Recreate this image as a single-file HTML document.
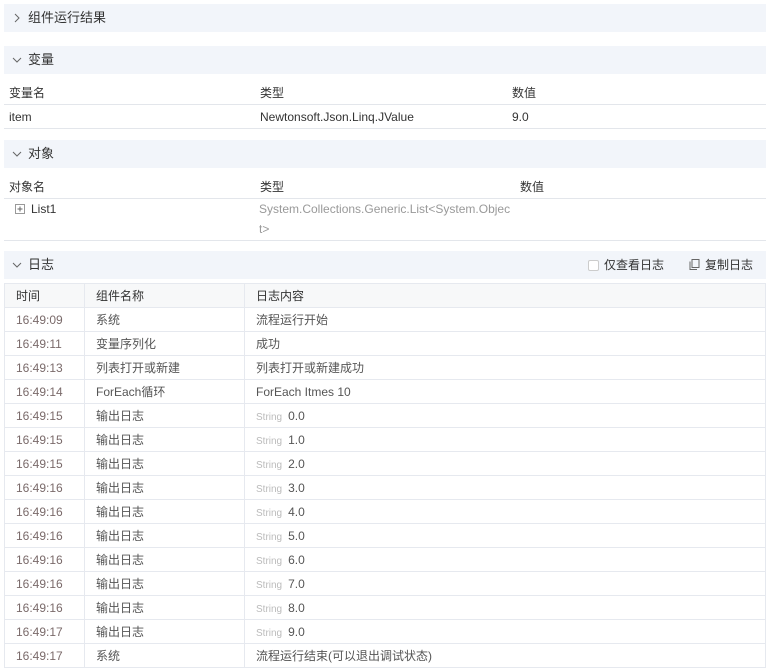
<!DOCTYPE html>
<html><head><meta charset="utf-8"><style>
*{margin:0;padding:0;box-sizing:border-box}
body{width:770px;height:671px;background:#fff;font-family:"Liberation Sans","Noto Sans CJK SC",sans-serif;font-size:12px;color:#333;position:relative;overflow:hidden}
.hd{position:absolute;left:4px;width:762px;height:28px;background:#f2f5fa;font-size:13px;line-height:28px;padding-left:24px;color:#333}
.hd > svg{position:absolute;left:8px;top:9px}
.a{position:absolute;white-space:nowrap}
.row{position:absolute;left:4px;width:762px;border-bottom:1px solid #e3e6eb}
table{position:absolute;left:4px;top:283px;width:762px;border-collapse:collapse}
td{border:1px solid #e6e9ef;height:24px;padding-left:11px;color:#555;font-size:12px}
tr.h td{background:#f7f8f9;color:#333}
td.t{color:#7a6a6a}
.s{color:#bbb;font-size:10px;margin-right:6px}
</style></head><body>
<div class="hd" style="top:4px"><svg width="10" height="10"><path d="M3 1l4 4-4 4" fill="none" stroke="#666" stroke-width="1"/></svg>组件运行结果</div>
<div class="hd" style="top:46px"><svg width="10" height="10"><path d="M1 3l4 4 4-4" fill="none" stroke="#666" stroke-width="1"/></svg>变量</div>
<div class="row" style="top:78px;height:27px;background:#fff"></div>
<div class="a" style="left:9px;top:84px">变量名</div><div class="a" style="left:260px;top:84px">类型</div><div class="a" style="left:512px;top:84px">数值</div>
<div class="row" style="top:105px;height:24px"></div>
<div class="a" style="left:9px;top:110px">item</div><div class="a" style="left:260px;top:110px">Newtonsoft.Json.Linq.JValue</div><div class="a" style="left:512px;top:110px">9.0</div>
<div class="hd" style="top:140px"><svg width="10" height="10"><path d="M1 3l4 4 4-4" fill="none" stroke="#666" stroke-width="1"/></svg>对象</div>
<div class="row" style="top:172px;height:27px"></div>
<div class="a" style="left:9px;top:178px">对象名</div><div class="a" style="left:260px;top:178px">类型</div><div class="a" style="left:520px;top:178px">数值</div>
<div class="row" style="top:199px;height:42px"></div>
<svg class="a" style="left:15px;top:204px" width="10" height="10"><rect x="0.5" y="0.5" width="9" height="9" fill="none" stroke="#999"/><path d="M2.5 5h5M5 2.5v5" stroke="#666"/></svg>
<div class="a" style="left:31px;top:202px">List1</div>
<div class="a" style="left:259px;top:202px;color:#999">System.Collections.Generic.List&lt;System.Objec</div>
<div class="a" style="left:259px;top:222px;color:#999">t&gt;</div>
<div class="hd" style="top:251px"><svg width="10" height="10"><path d="M1 3l4 4 4-4" fill="none" stroke="#666" stroke-width="1"/></svg>日志
<span class="a" style="left:584px;top:0;font-size:12px"><span style="display:inline-block;width:11px;height:11px;border:1px solid #ccc;border-radius:2px;background:#fff;vertical-align:-2px;margin-right:5px"></span>仅查看日志</span>
<span class="a" style="left:685px;top:0;font-size:12px"><svg width="11" height="11" style="vertical-align:-1px;margin-right:5px"><rect x="3" y="0.5" width="7" height="8" fill="none" stroke="#666"/><path d="M1 2.5v8h7" fill="none" stroke="#666"/></svg>复制日志</span></div>
<table>
<tr class="h"><td style="width:80px">时间</td><td style="width:160px">组件名称</td><td>日志内容</td></tr>
<tr><td class="t">16:49:09</td><td>系统</td><td>流程运行开始</td></tr>
<tr><td class="t">16:49:11</td><td>变量序列化</td><td>成功</td></tr>
<tr><td class="t">16:49:13</td><td>列表打开或新建</td><td>列表打开或新建成功</td></tr>
<tr><td class="t">16:49:14</td><td>ForEach循环</td><td>ForEach Itmes 10</td></tr>
<tr><td class="t">16:49:15</td><td>输出日志</td><td><span class="s">String</span>0.0</td></tr>
<tr><td class="t">16:49:15</td><td>输出日志</td><td><span class="s">String</span>1.0</td></tr>
<tr><td class="t">16:49:15</td><td>输出日志</td><td><span class="s">String</span>2.0</td></tr>
<tr><td class="t">16:49:16</td><td>输出日志</td><td><span class="s">String</span>3.0</td></tr>
<tr><td class="t">16:49:16</td><td>输出日志</td><td><span class="s">String</span>4.0</td></tr>
<tr><td class="t">16:49:16</td><td>输出日志</td><td><span class="s">String</span>5.0</td></tr>
<tr><td class="t">16:49:16</td><td>输出日志</td><td><span class="s">String</span>6.0</td></tr>
<tr><td class="t">16:49:16</td><td>输出日志</td><td><span class="s">String</span>7.0</td></tr>
<tr><td class="t">16:49:16</td><td>输出日志</td><td><span class="s">String</span>8.0</td></tr>
<tr><td class="t">16:49:17</td><td>输出日志</td><td><span class="s">String</span>9.0</td></tr>
<tr><td class="t">16:49:17</td><td>系统</td><td>流程运行结束(可以退出调试状态)</td></tr>
</table>
</body></html>
